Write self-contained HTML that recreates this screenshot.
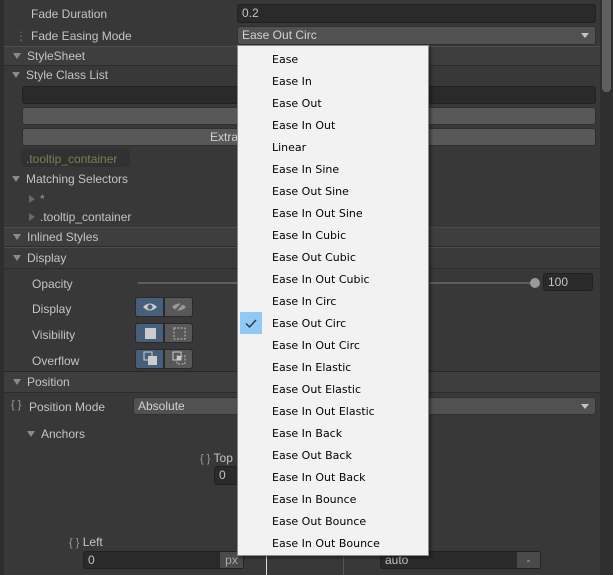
<!DOCTYPE html>
<html><head><style>
*{margin:0;padding:0;box-sizing:border-box}
body{width:613px;height:575px;background:#383838;font-family:"Liberation Sans",sans-serif;font-size:12px;color:#c4c4c4;position:relative;overflow:hidden}
.a{position:absolute;white-space:nowrap}
.fld{position:absolute;background:#2a2a2a;border:1px solid #212121;border-radius:3px;padding-left:4px;line-height:16px}
.dd{position:absolute;background:#515151;border:1px solid #303030;border-radius:3px;padding-left:4px;line-height:16px;color:#d2d2d2}
.btn{position:absolute;background:#585858;border:1px solid #303030;border-radius:3px}
.hdr{position:absolute;left:4px;width:596px;background:#3e3e3e;border-top:1px solid #4d4d4d;border-bottom:1px solid #2c2c2c}
.tri{display:inline-block;width:0;height:0;border-left:4px solid transparent;border-right:4px solid transparent;border-top:6px solid #8a8a8a;margin-right:6px;vertical-align:1px}
.tr{display:inline-block;width:0;height:0;border-top:4px solid transparent;border-bottom:4px solid transparent;border-left:6px solid #6a6a6a;margin-right:5px;vertical-align:0}
.caret{position:absolute;right:6px;top:6px;border-left:4px solid transparent;border-right:4px solid transparent;border-top:5px solid #c4c4c4}
.menu{position:absolute;left:237px;top:45px;width:192px;height:511px;background:#f2f2f2;border:1px solid #8a8a8a;box-shadow:2px 2px 3px rgba(0,0,0,.4)}
.menu div{position:absolute;left:34px;color:#000;font-family:"DejaVu Sans","Liberation Sans",sans-serif;font-size:11px;line-height:22px;height:22px;margin-top:1px}
.tg{position:absolute;width:29px;height:20px;border:1px solid #2a2a2a}
</style></head><body>
<div class="a" style="left:0;top:0;width:4px;height:575px;background:#2e2e2e"></div>
<div class="a" style="left:600px;top:0;width:13px;height:575px;background:#2f2f2f"></div>
<div class="a" style="left:602px;top:0;width:9px;height:92px;background:#5f5f5f;border-radius:0 0 4px 4px"></div>

<div class="a" style="left:31px;top:7px">Fade Duration</div>
<div class="fld" style="left:237px;top:4px;width:359px;height:19px">0.2</div>
<div class="a" style="left:15px;top:29px;color:#6a6a6a">⋮</div>
<div class="a" style="left:31px;top:29px">Fade Easing Mode</div>
<div class="dd" style="left:237px;top:26px;width:359px;height:19px">Ease Out Circ<span class="caret"></span></div>

<div class="hdr" style="top:46px;height:20px"><span class="a" style="left:9px;top:2px"><span class="tri"></span>StyleSheet</span></div>
<div class="a" style="left:12px;top:68px"><span class="tri"></span>Style Class List</div>
<div class="fld" style="left:22px;top:86px;width:574px;height:18px"></div>
<div class="btn" style="left:22px;top:107px;width:574px;height:18px"></div>
<div class="btn" style="left:22px;top:128px;width:574px;height:18px"><span class="a" style="left:187px;top:1px;color:#d2d2d2">Extra</span></div>
<div class="a" style="left:21px;top:149px;width:109px;height:18px;background:#313131;border-radius:3px"></div>
<div class="a" style="left:26px;top:152px;color:#7f7f52">.tooltip_container</div>
<div class="a" style="left:12px;top:172px"><span class="tri"></span>Matching Selectors</div>
<div class="a" style="left:29px;top:192px;color:#9a9a9a"><span class="tr"></span>*</div>
<div class="a" style="left:29px;top:210px"><span class="tr"></span>.tooltip_container</div>

<div class="hdr" style="top:227px;height:20px"><span class="a" style="left:9px;top:2px"><span class="tri"></span>Inlined Styles</span></div>
<div class="hdr" style="top:247px;height:22px;background:#3a3a3a"><span class="a" style="left:9px;top:3px"><span class="tri"></span>Display</span></div>

<div class="a" style="left:32px;top:277px">Opacity</div>
<div class="a" style="left:138px;top:282px;width:397px;height:2px;background:#5e5e5e"></div>
<div class="a" style="left:530px;top:278px;width:10px;height:10px;border-radius:5px;background:#999"></div>
<div class="fld" style="left:543px;top:273px;width:50px;height:18px">100</div>

<div class="a" style="left:32px;top:302px">Display</div>
<div class="a" style="left:32px;top:328px">Visibility</div>
<div class="a" style="left:32px;top:354px">Overflow</div>
<div class="tg" style="left:135px;top:297px;background:#46607c;border-radius:3px 0 0 3px"></div>
<div class="tg" style="left:164px;top:297px;background:#585858;border-radius:0 3px 3px 0"></div>
<div class="tg" style="left:135px;top:323px;background:#46607c;border-radius:3px 0 0 3px"></div>
<div class="tg" style="left:164px;top:323px;background:#585858;border-radius:0 3px 3px 0"></div>
<div class="tg" style="left:135px;top:349px;background:#46607c;border-radius:3px 0 0 3px"></div>
<div class="tg" style="left:164px;top:349px;background:#585858;border-radius:0 3px 3px 0"></div>
<svg class="a" style="left:135px;top:297px" width="58" height="72" viewBox="0 0 58 72">
<path d="M8 10 Q15 3 22 10 Q15 17 8 10Z" fill="#ccc"/><circle cx="15" cy="10" r="2.5" fill="#46607c"/>
<path d="M37 10 Q44 3 51 10 Q44 17 37 10Z" fill="#999"/><path d="M38 16 L50 4" stroke="#585858" stroke-width="2"/>
<rect x="10" y="31" width="11" height="11" fill="#ccc"/>
<rect x="39" y="31" width="11" height="11" fill="none" stroke="#bbb" stroke-dasharray="2 1.5"/>
<rect x="9" y="55" width="8" height="8" fill="none" stroke="#ccc"/><rect x="13" y="59" width="9" height="9" fill="#ccc"/>
<rect x="38" y="55" width="8" height="8" fill="none" stroke="#ccc"/><rect x="42" y="59" width="8" height="8" fill="none" stroke="#bbb" stroke-dasharray="2 1.5"/><rect x="42" y="59" width="4" height="4" fill="#ccc"/>
</svg>

<div class="a" style="left:4px;top:371px;width:596px;height:1px;background:#262626"></div>
<div class="hdr" style="top:372px;height:21px;border-top:none"><span class="a" style="left:9px;top:3px"><span class="tri"></span>Position</span></div>
<div class="a" style="left:11px;top:399px;color:#9a9a9a;font-size:11px">{ }</div>
<div class="a" style="left:29px;top:400px">Position Mode</div>
<div class="dd" style="left:133px;top:397px;width:463px;height:18px">Absolute<span class="caret"></span></div>
<div class="a" style="left:27px;top:427px"><span class="tri"></span>Anchors</div>
<div class="a" style="left:200px;top:451px"><span style="color:#9a9a9a;font-size:11px">{ }</span> Top</div>
<div class="fld" style="left:214px;top:466px;width:30px;height:19px">0</div>
<div class="a" style="left:69px;top:535px"><span style="color:#9a9a9a;font-size:11px">{ }</span> Left</div>
<div class="fld" style="left:83px;top:551px;width:161px;height:18px">0</div>
<div class="a" style="left:220px;top:552px;width:23px;height:16px;background:#4a4a4a;color:#aaa;text-align:center;line-height:16px">px</div>
<div class="fld" style="left:380px;top:551px;width:161px;height:18px">auto</div>
<div class="a" style="left:517px;top:552px;width:23px;height:16px;background:#4a4a4a;color:#aaa;text-align:center;line-height:16px">-</div>
<div class="a" style="left:266px;top:556px;width:1px;height:19px;background:#ddd"></div>
<div class="a" style="left:343px;top:556px;width:1px;height:19px;background:#555"></div>

<div class="menu">
<span class="a" style="left:2px;top:266px;width:22px;height:22px;background:#90c8f6"></span>
<svg class="a" style="left:7px;top:273px" width="12" height="9"><path d="M1 4.5 L4.5 8 L11 1" stroke="#333" stroke-width="1.4" fill="none"/></svg>
<div style="top:2px">Ease</div><div style="top:24px">Ease In</div><div style="top:46px">Ease Out</div><div style="top:68px">Ease In Out</div><div style="top:90px">Linear</div><div style="top:112px">Ease In Sine</div><div style="top:134px">Ease Out Sine</div><div style="top:156px">Ease In Out Sine</div><div style="top:178px">Ease In Cubic</div><div style="top:200px">Ease Out Cubic</div><div style="top:222px">Ease In Out Cubic</div><div style="top:244px">Ease In Circ</div><div style="top:266px">Ease Out Circ</div><div style="top:288px">Ease In Out Circ</div><div style="top:310px">Ease In Elastic</div><div style="top:332px">Ease Out Elastic</div><div style="top:354px">Ease In Out Elastic</div><div style="top:376px">Ease In Back</div><div style="top:398px">Ease Out Back</div><div style="top:420px">Ease In Out Back</div><div style="top:442px">Ease In Bounce</div><div style="top:464px">Ease Out Bounce</div><div style="top:486px">Ease In Out Bounce</div>
</div>
</body></html>
